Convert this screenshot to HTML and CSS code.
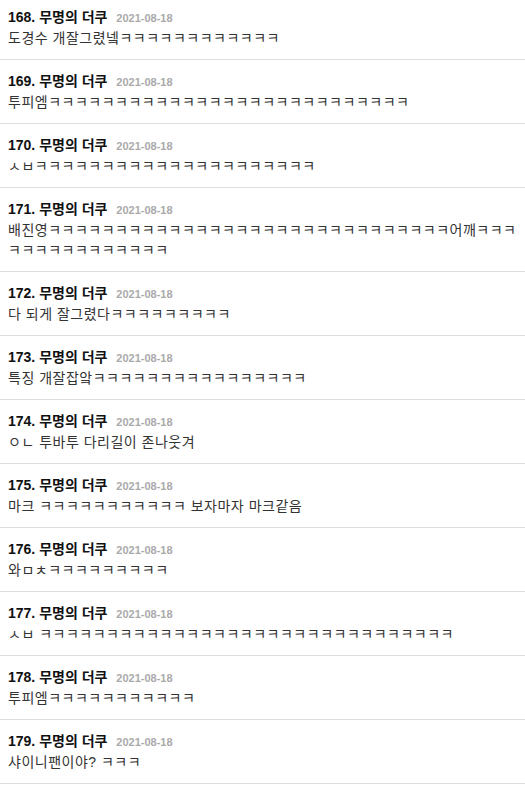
FILE: index.html
```html
<!DOCTYPE html>
<html>
<head>
	<meta charset="UTF-8">
	<meta name="viewport" content="width=device-width, initial-scale=1">
	<title>댓글</title>
	<link rel="stylesheet" href="styles.css">
</head>
<body>

<ul class="comment-list">
	<li class="comment">
		<div class="comment-head"><span class="comment-no">168.</span> 무명의 더쿠 <span class="comment-date">2021-08-18</span></div>
		<div class="comment-body">도경수 개잘그렸넼ㅋㅋㅋㅋㅋㅋㅋㅋㅋㅋㅋㅋ</div>
	</li>
	<li class="comment">
		<div class="comment-head"><span class="comment-no">169.</span> 무명의 더쿠 <span class="comment-date">2021-08-18</span></div>
		<div class="comment-body">투피엠ㅋㅋㅋㅋㅋㅋㅋㅋㅋㅋㅋㅋㅋㅋㅋㅋㅋㅋㅋㅋㅋㅋㅋㅋㅋㅋㅋ</div>
	</li>
	<li class="comment">
		<div class="comment-head"><span class="comment-no">170.</span> 무명의 더쿠 <span class="comment-date">2021-08-18</span></div>
		<div class="comment-body">ㅅㅂㅋㅋㅋㅋㅋㅋㅋㅋㅋㅋㅋㅋㅋㅋㅋㅋㅋㅋㅋㅋㅋ</div>
	</li>
	<li class="comment">
		<div class="comment-head"><span class="comment-no">171.</span> 무명의 더쿠 <span class="comment-date">2021-08-18</span></div>
		<div class="comment-body">배진영ㅋㅋㅋㅋㅋㅋㅋㅋㅋㅋㅋㅋㅋㅋㅋㅋㅋㅋㅋㅋㅋㅋㅋㅋㅋㅋㅋㅋㅋㅋ어깨ㅋㅋㅋㅋㅋㅋㅋㅋㅋㅋㅋㅋㅋㅋㅋ</div>
	</li>
	<li class="comment">
		<div class="comment-head"><span class="comment-no">172.</span> 무명의 더쿠 <span class="comment-date">2021-08-18</span></div>
		<div class="comment-body">다 되게 잘그렸다ㅋㅋㅋㅋㅋㅋㅋㅋㅋ</div>
	</li>
	<li class="comment">
		<div class="comment-head"><span class="comment-no">173.</span> 무명의 더쿠 <span class="comment-date">2021-08-18</span></div>
		<div class="comment-body">특징 개잘잡앜ㅋㅋㅋㅋㅋㅋㅋㅋㅋㅋㅋㅋㅋㅋㅋㅋ</div>
	</li>
	<li class="comment">
		<div class="comment-head"><span class="comment-no">174.</span> 무명의 더쿠 <span class="comment-date">2021-08-18</span></div>
		<div class="comment-body">ㅇㄴ 투바투 다리길이 존나웃겨</div>
	</li>
	<li class="comment">
		<div class="comment-head"><span class="comment-no">175.</span> 무명의 더쿠 <span class="comment-date">2021-08-18</span></div>
		<div class="comment-body">마크 ㅋㅋㅋㅋㅋㅋㅋㅋㅋㅋㅋ 보자마자 마크같음</div>
	</li>
	<li class="comment">
		<div class="comment-head"><span class="comment-no">176.</span> 무명의 더쿠 <span class="comment-date">2021-08-18</span></div>
		<div class="comment-body">와ㅁㅊㅋㅋㅋㅋㅋㅋㅋㅋㅋ</div>
	</li>
	<li class="comment">
		<div class="comment-head"><span class="comment-no">177.</span> 무명의 더쿠 <span class="comment-date">2021-08-18</span></div>
		<div class="comment-body">ㅅㅂ ㅋㅋㅋㅋㅋㅋㅋㅋㅋㅋㅋㅋㅋㅋㅋㅋㅋㅋㅋㅋㅋㅋㅋㅋㅋㅋㅋㅋㅋㅋㅋ</div>
	</li>
	<li class="comment">
		<div class="comment-head"><span class="comment-no">178.</span> 무명의 더쿠 <span class="comment-date">2021-08-18</span></div>
		<div class="comment-body">투피엠ㅋㅋㅋㅋㅋㅋㅋㅋㅋㅋㅋ</div>
	</li>
	<li class="comment">
		<div class="comment-head"><span class="comment-no">179.</span> 무명의 더쿠 <span class="comment-date">2021-08-18</span></div>
		<div class="comment-body">샤이니팬이야? ㅋㅋㅋ</div>
	</li>
</ul>

</body>
</html>
```

FILE: styles.css
```css
html, body {
	margin: 0;
	padding: 0;
	background-color: #ffffff;
}

body {
	font-family: "Liberation Sans", "Noto Sans CJK KR", sans-serif;
	color: #222222;
}

/* 댓글 목록 */
.comment-list {
	list-style-type: none;
	margin: 0;
	padding: 0;
}

.comment {
	padding: 10px 0 11px 8px;
	border-bottom: 1px solid #dddddd;
}

/* 맨 위 댓글은 위쪽이 조금 잘려 있음 */
.comment:first-child {
	padding-top: 6px;
}

.comment-head {
	font-size: 14px;
	font-weight: bold;
	line-height: 22px;
	height: 22px;
	color: #111111;
}

.comment-date {
	font-size: 11px;
	color: #aaaaaa;
	margin-left: 5px;
}

.comment-body {
	font-size: 14px;
	line-height: 20px;
	letter-spacing: 0.5px;
	color: #333333;
	word-break: break-all;
}
```
